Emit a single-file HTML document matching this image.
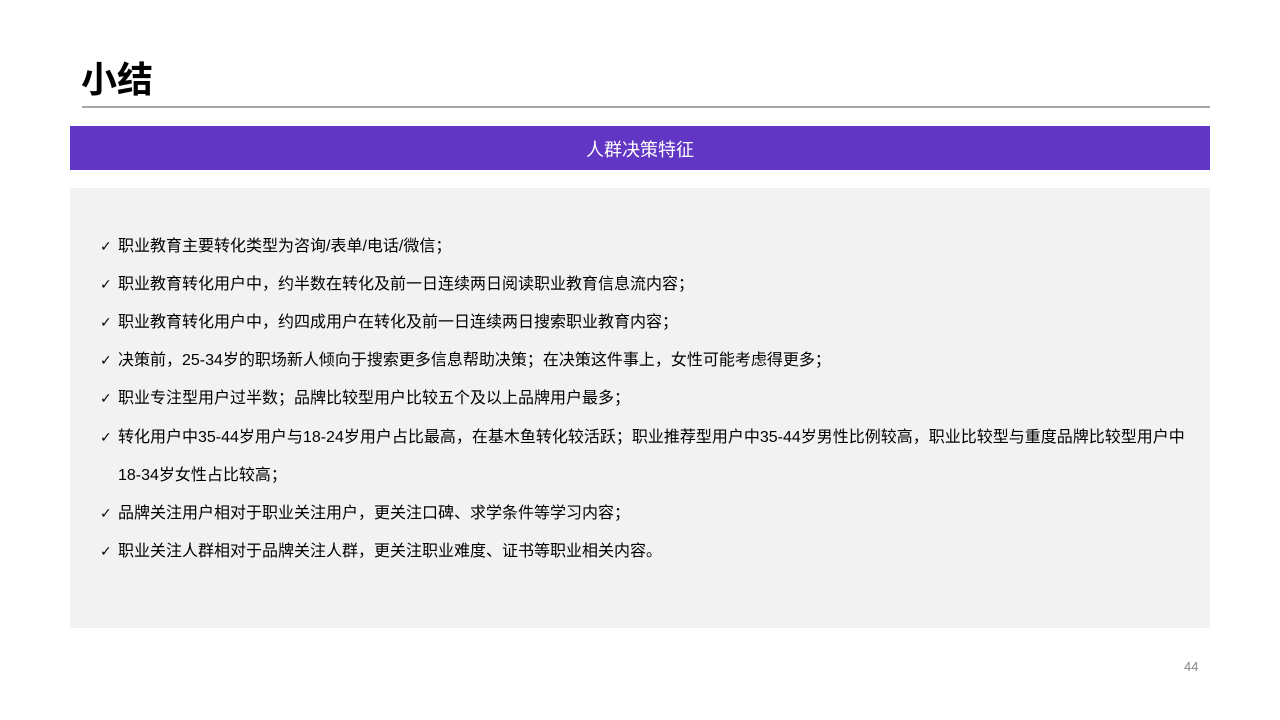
<!DOCTYPE html>
<html><head><meta charset="utf-8"><style>
body{margin:0;width:1280px;height:720px;background:#fff;position:relative;overflow:hidden;font-family:"Liberation Sans","Noto Sans CJK SC",sans-serif;}
.t{position:absolute;left:81px;top:55px;font-size:36px;font-weight:bold;color:#000;line-height:50px;}
.ln{position:absolute;left:82px;top:106px;width:1128px;height:2px;background:#a6a6a6;}
.bar{position:absolute;left:70px;top:126px;width:1140px;height:44px;background:#6236c5;color:#fff;font-size:18px;text-align:center;line-height:48px;}
.box{position:absolute;left:70px;top:188px;width:1140px;height:440px;background:#f2f2f2;}
.l{position:absolute;left:100px;font-size:16px;color:#000;line-height:38px;white-space:nowrap;}
.l span{display:inline-block;width:18px;font-family:"DejaVu Sans",sans-serif;font-size:14px;}
.pg{position:absolute;left:1184px;top:659px;font-size:13px;color:#888;}
</style></head><body>
<div class="t">小结</div>
<div class="ln"></div>
<div class="bar">人群决策特征</div>
<div class="box"></div>
<div class="l" style="top:228px"><span>✓</span>职业教育主要转化类型为咨询/表单/电话/微信；</div>
<div class="l" style="top:266px"><span>✓</span>职业教育转化用户中，约半数在转化及前一日连续两日阅读职业教育信息流内容；</div>
<div class="l" style="top:304px"><span>✓</span>职业教育转化用户中，约四成用户在转化及前一日连续两日搜索职业教育内容；</div>
<div class="l" style="top:342px"><span>✓</span>决策前，25-34岁的职场新人倾向于搜索更多信息帮助决策；在决策这件事上，女性可能考虑得更多；</div>
<div class="l" style="top:380px"><span>✓</span>职业专注型用户过半数；品牌比较型用户比较五个及以上品牌用户最多；</div>
<div class="l" style="top:419px"><span>✓</span>转化用户中35-44岁用户与18-24岁用户占比最高，在基木鱼转化较活跃；职业推荐型用户中35-44岁男性比例较高，职业比较型与重度品牌比较型用户中</div>
<div class="l" style="top:457px"><span></span>18-34岁女性占比较高；</div>
<div class="l" style="top:495px"><span>✓</span>品牌关注用户相对于职业关注用户，更关注口碑、求学条件等学习内容；</div>
<div class="l" style="top:533px"><span>✓</span>职业关注人群相对于品牌关注人群，更关注职业难度、证书等职业相关内容。</div>
<div class="pg">44</div>
</body></html>
